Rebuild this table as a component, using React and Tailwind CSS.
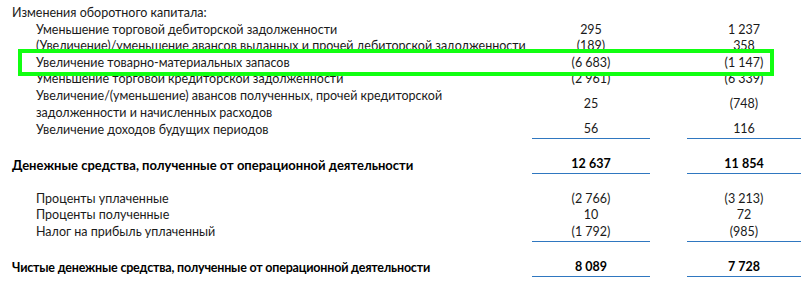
import React from 'react';

const rows1 = [
  { label: 'Уменьшение торговой дебиторской задолженности', a: '295', b: '1 237' },
  { label: '(Увеличение)/уменьшение авансов выданных и прочей дебиторской задолженности', a: '(189)', b: '358' },
  { label: 'Увеличение товарно-материальных запасов', a: '(6 683)', b: '(1 147)', hl: true },
  { label: 'Уменьшение торговой кредиторской задолженности', a: '(2 961)', b: '(6 339)' },
  {
    label: ['Увеличение/(уменьшение) авансов полученных, прочей кредиторской', 'задолженности и начисленных расходов'],
    a: '25',
    b: '(748)',
  },
  { label: 'Увеличение доходов будущих периодов', a: '56', b: '116', line: true },
];

const rows2 = [
  { label: 'Проценты уплаченные', a: '(2 766)', b: '(3 213)' },
  { label: 'Проценты полученные', a: '10', b: '72' },
  { label: 'Налог на прибыль уплаченный', a: '(1 792)', b: '(985)', line: true },
];

const Row = ({ row, bold, indent = true }) => {
  const lines = Array.isArray(row.label) ? row.label : [row.label];
  const cell = row.line || bold ? 'border-b border-[#2f77c0]' : '';
  return (
    <div className={`flex items-center ${bold ? 'font-bold text-black h-[17px]' : ''}`}>
      <div className={`flex-1 ${indent ? 'pl-[24px]' : ''} ${row.cls || ''}`}>
        {lines.map((l, i) => (
          <div key={i} className="whitespace-nowrap">{l}</div>
        ))}
      </div>
      <div className={`w-[118px] self-stretch flex items-center justify-center ${cell}`}>{row.a}</div>
      <div className="w-[37px]" />
      <div className={`w-[114px] self-stretch flex items-center justify-center ${cell}`}>{row.b}</div>
    </div>
  );
};

export default function App() {
  return (
    <div
      className="w-[804px] h-[293px] bg-white pl-[12px] pr-[3px] pt-[5px] text-[12.5px] leading-[16.6px] text-[#1a1a1a] overflow-hidden"
      style={{ fontFamily: 'Lato, "Noto Sans", sans-serif' }}
    >
      <div>Изменения оборотного капитала:</div>
      {rows1.map((r, i) =>
        r.hl ? (
          <div key={i} className="relative">
            {/* зелёная рамка выделения поверх соседних строк */}
            <div className="absolute left-[6px] right-[27px] -top-[6px] -bottom-[5px] border-[4px] border-[#11ff11] bg-white" />
            <div className="relative">
              <Row row={r} />
            </div>
          </div>
        ) : (
          <Row key={i} row={r} />
        )
      )}
      <div className="h-[18px]" />
      <Row
        row={{ label: 'Денежные средства, полученные от операционной деятельности', a: '12 637', b: '11 854', cls: 'text-[13px]' }}
        bold
        indent={false}
      />
      <div className="h-[17px]" />
      {rows2.map((r, i) => (
        <Row key={i} row={r} />
      ))}
      <div className="h-[18px]" />
      <Row
        row={{ label: 'Чистые денежные средства, полученные от операционной деятельности', a: '8 089', b: '7 728', cls: 'tracking-[-0.2px]' }}
        bold
        indent={false}
      />
    </div>
  );
}
